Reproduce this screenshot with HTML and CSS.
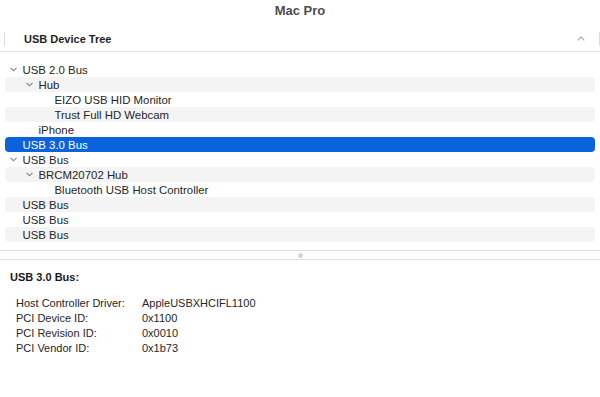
FILE: index.html
```html
<!DOCTYPE html>
<html lang="en">
<head>
    <meta charset="UTF-8">
    <title>Mac Pro</title>
    <link rel="stylesheet" href="styles.css">
</head>
<body>

    <div class="title-bar">Mac Pro</div>

    <div class="tree-header">
        <span class="col-divider"></span>
        <span class="col-title">USB Device Tree</span>
        <svg class="sort-icon" width="8" height="5" viewBox="0 0 8 5"><path d="M0.6 4.4 L4 1 L7.4 4.4" fill="none" stroke="#a6a6a6" stroke-width="1.1"/></svg>
        <span class="col-divider"></span>
    </div>

    <!-- дерево устройств -->
    <div class="tree">
        <div class="tree-row lvl-0"><span class="toggle"><svg width="7" height="5" viewBox="0 0 7 5"><path d="M0.5 0.8 L3.5 3.8 L6.5 0.8" fill="none" stroke="#808080" stroke-width="1.1"/></svg></span>USB 2.0 Bus</div>
        <div class="tree-row lvl-1"><span class="toggle"><svg width="7" height="5" viewBox="0 0 7 5"><path d="M0.5 0.8 L3.5 3.8 L6.5 0.8" fill="none" stroke="#808080" stroke-width="1.1"/></svg></span>Hub</div>
        <div class="tree-row lvl-2"><span class="toggle"></span>EIZO USB HID Monitor</div>
        <div class="tree-row lvl-2"><span class="toggle"></span>Trust Full HD Webcam</div>
        <div class="tree-row lvl-1"><span class="toggle"></span>iPhone</div>
        <div class="tree-row lvl-0 selected"><span class="toggle"></span>USB 3.0 Bus</div>
        <div class="tree-row lvl-0"><span class="toggle"><svg width="7" height="5" viewBox="0 0 7 5"><path d="M0.5 0.8 L3.5 3.8 L6.5 0.8" fill="none" stroke="#808080" stroke-width="1.1"/></svg></span>USB Bus</div>
        <div class="tree-row lvl-1"><span class="toggle"><svg width="7" height="5" viewBox="0 0 7 5"><path d="M0.5 0.8 L3.5 3.8 L6.5 0.8" fill="none" stroke="#808080" stroke-width="1.1"/></svg></span>BRCM20702 Hub</div>
        <div class="tree-row lvl-2"><span class="toggle"></span>Bluetooth USB Host Controller</div>
        <div class="tree-row lvl-0"><span class="toggle"></span>USB Bus</div>
        <div class="tree-row lvl-0"><span class="toggle"></span>USB Bus</div>
        <div class="tree-row lvl-0"><span class="toggle"></span>USB Bus</div>
    </div>

    <div class="splitter"><span class="splitter-dot"></span></div>

    <!-- детали -->
    <div class="details">
        <h4>USB 3.0 Bus:</h4>
        <div class="props">
            <span>Host Controller Driver:</span><span>AppleUSBXHCIFL1100</span>
            <span>PCI Device ID:</span><span>0x1100</span>
            <span>PCI Revision ID:</span><span>0x0010</span>
            <span>PCI Vendor ID:</span><span>0x1b73</span>
        </div>
    </div>

</body>
</html>
```

FILE: styles.css
```css
/* Сброс */
* {
    margin: 0;
    padding: 0;
    box-sizing: border-box;
}

body {
    width: 600px;
    height: 397px;
    overflow: hidden;
    background-color: #fff;
    font-family: "Liberation Sans", Arial, sans-serif;
    color: #262626;
}

/* Заголовок окна */
.title-bar {
    height: 22px;
    line-height: 22px;
    text-align: center;
    font-size: 13px;
    font-weight: bold;
    color: #4d4d4d;
}

/* Шапка колонки */
.tree-header {
    display: flex;
    align-items: center;
    height: 30px;
    padding-top: 5px;
    border-bottom: 1px solid #e0e0e0;
}

.col-divider {
    width: 1px;
    height: 14px;
    background-color: #dcdcdc;
    margin-left: 4px;
}

.col-title {
    flex: 1;
    padding-left: 19px;
    font-size: 11px;
    font-weight: bold;
    color: #1f1f1f;
}

.sort-icon {
    margin-right: 10px;
    margin-top: -1px;
}

/* Дерево */
.tree {
    padding: 10px 5px 0;
    height: 198px;
}

.tree-row {
    display: flex;
    align-items: center;
    height: 15px;
    font-size: 11.4px;
    border-radius: 4px;
    white-space: nowrap;
}

.tree-row:nth-child(even) {
    background-color: #f4f4f4;
}

.tree-row.selected {
    background-color: #0a63dc;
    color: #fff;
}

.toggle {
    display: flex;
    align-items: center;
    width: 12.5px;
    height: 15px;
}

.lvl-0 { padding-left: 5px; }
.lvl-1 { padding-left: 21px; }
.lvl-2 { padding-left: 37px; }

/* Разделитель */
.splitter {
    display: flex;
    justify-content: center;
    align-items: center;
    height: 10px;
    border-top: 1px solid #dedede;
    border-bottom: 1px solid #dedede;
}

.splitter-dot {
    width: 5px;
    height: 5px;
    border-radius: 50%;
    background-color: #d6d6d6;
}

/* Детали */
.details {
    padding: 10px 10px 0;
}

.details h4 {
    font-size: 11px;
    line-height: 14px;
    font-weight: bold;
    color: #1a1a1a;
}

.props {
    display: grid;
    grid-template-columns: 126px auto;
    justify-content: start;
    padding: 12px 0 0 6px;
    font-size: 11px;
    line-height: 15px;
}
```
